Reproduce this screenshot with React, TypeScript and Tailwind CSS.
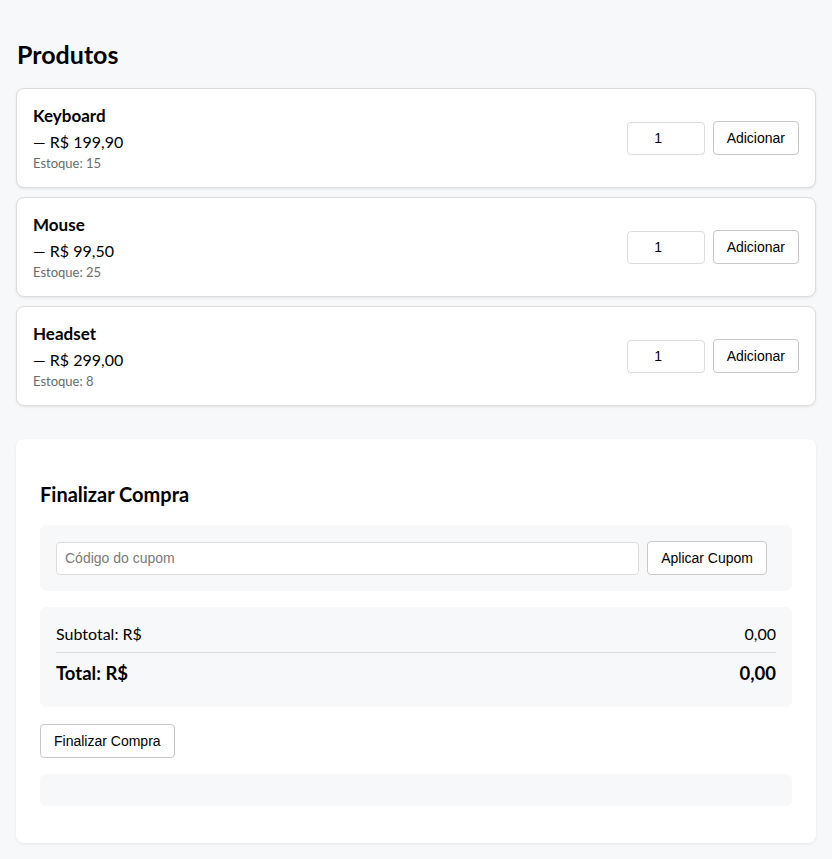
import React from 'react';

const products = [
  { name: 'Keyboard', price: '199,90', stock: 15 },
  { name: 'Mouse', price: '99,50', stock: 25 },
  { name: 'Headset', price: '299,00', stock: 8 },
];

const sans = 'font-["Segoe_UI",Lato,"Noto_Sans",sans-serif]';
const btn =
  'h-[34px] px-[13px] rounded-[4px] border border-[#c8c8c8] bg-white text-[14px] text-black font-["Liberation_Sans",Arial,sans-serif]';

const App: React.FC = () => {
  return (
    <div className={`min-h-screen bg-[#f7f8fa] px-4 pt-[38px] pb-4 text-black ${sans}`}>
      <h1 className="text-[25px] font-bold leading-[32px] pl-px mb-[18px]">Produtos</h1>

      <div className="flex flex-col gap-[9px]">
        {products.map((p) => (
          <div
            key={p.name}
            className="flex items-center justify-between bg-white border border-[#dcdcdc] rounded-lg shadow-[0_1px_3px_rgba(0,0,0,0.08)] p-4"
          >
            <div>
              <div className="text-[17px] font-bold leading-[22px] mb-[3px]">{p.name}</div>
              <div className="text-[16px] leading-6">— R$ {p.price}</div>
              <div className="text-[13px] leading-4 pt-px text-[#6b6b6b]">Estoque: {p.stock}</div>
            </div>
            <div className="flex items-center gap-2">
              <input
                type="number"
                defaultValue={1}
                className="w-[78px] h-[33px] rounded-[4px] border border-[#dcdcdc] text-center text-[14px] font-['Liberation_Sans',Arial,sans-serif]"
              />
              <button className={btn}>Adicionar</button>
            </div>
          </div>
        ))}
      </div>

      <div className="mt-[33px] bg-white rounded-lg shadow-[0_1px_3px_rgba(0,0,0,0.08)] px-6 pt-[42px] pb-[37px]">
        <h2 className="text-[20px] font-bold leading-[26px] mb-[18px]">Finalizar Compra</h2>

        <div className="bg-[#f7f8fa] rounded-md pl-4 pr-[25px] py-4 flex items-center gap-2">
          <input
            placeholder="Código do cupom"
            className="flex-1 h-[33px] rounded-[4px] border border-[#dcdcdc] bg-white px-2 text-[14px] font-['Liberation_Sans',Arial,sans-serif] placeholder:text-[#7a7a7a]"
          />
          <button className={btn}>Aplicar Cupom</button>
        </div>

        <div className="mt-4 bg-[#f7f8fa] rounded-md px-4 pt-[15px] pb-[22px]">
          <div className="flex justify-between text-[16px] leading-6 pb-[6px] border-b border-[#dcdcdc]">
            <span>Subtotal: R$</span>
            <span>0,00</span>
          </div>
          <div className="flex justify-between text-[18.5px] font-bold leading-6 pt-[8px]">
            <span>Total: R$</span>
            <span>0,00</span>
          </div>
        </div>

        <button className={`${btn} mt-[17px]`}>Finalizar Compra</button>

        <div className="mt-4 bg-[#f7f8fa] rounded-md h-[32px]" />
      </div>
    </div>
  );
};

export default App;
